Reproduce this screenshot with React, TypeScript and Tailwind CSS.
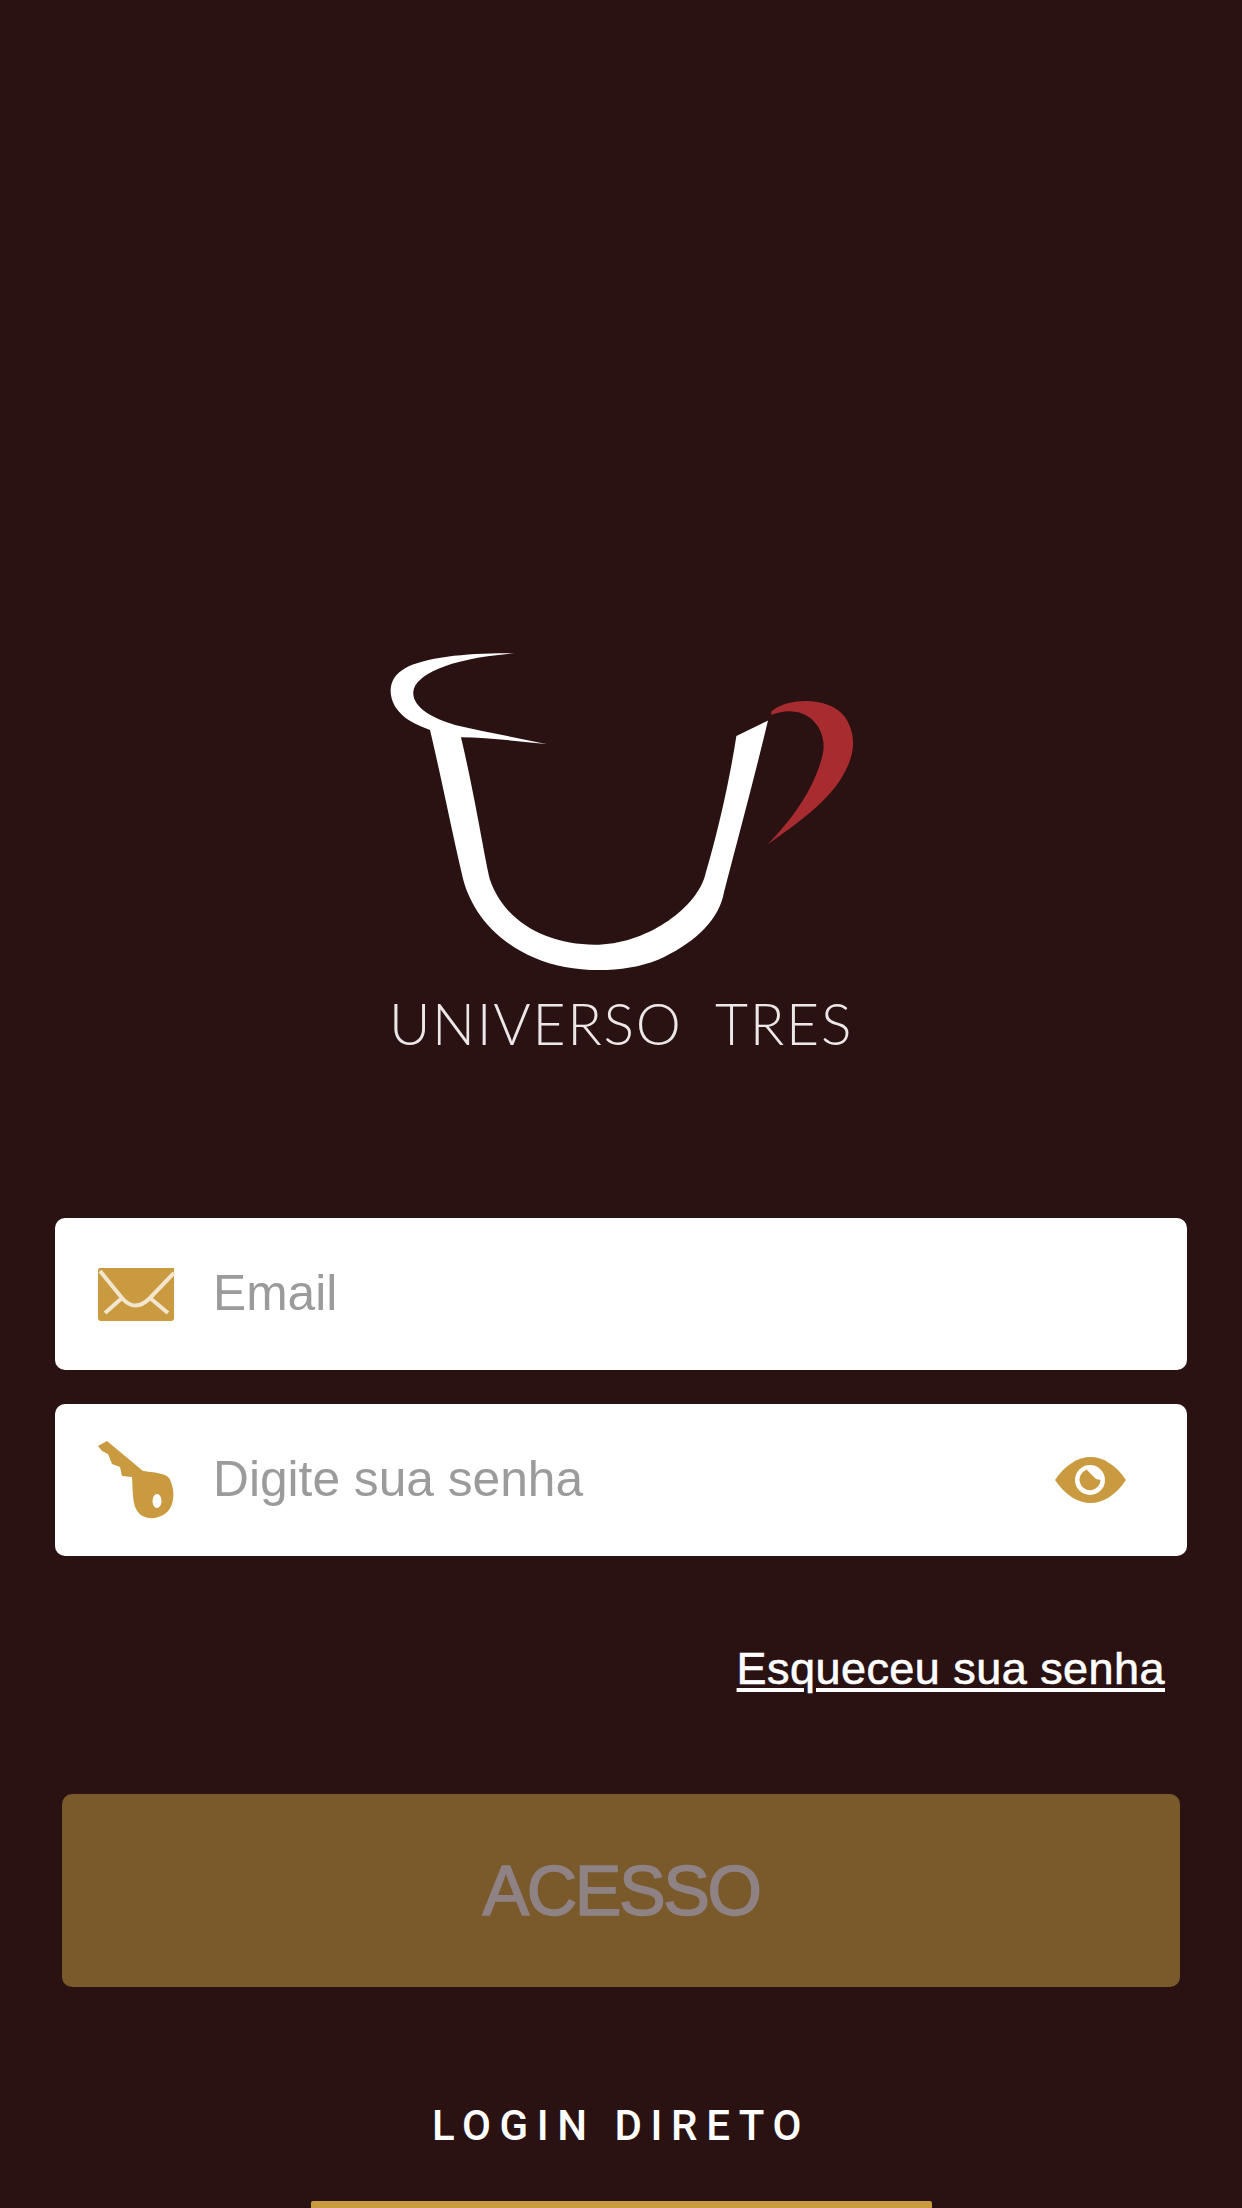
// App.tsx - login screen
import React from "react";

const GOLD = "#c99a40";

const CupLogo = () => (
  <svg viewBox="80 60 1400 970" className="block h-[323px] w-[467px]">
    <path
      fill="#ffffff"
      d="M460 70 C330 68 190 80 130 115 C85 140 75 185 100 230 C125 270 165 285 205 300 C240 450 270 600 300 730 C320 830 390 930 520 985 C620 1030 780 1035 890 990 C990 945 1065 880 1085 800 C1110 700 1170 480 1220 272 L1125 318 C1100 480 1060 640 1030 740 C1000 840 850 945 700 945 C560 945 430 880 385 750 C370 690 340 500 298 322 C380 322 470 335 555 342 C470 325 370 305 280 285 C210 265 150 230 155 185 C160 135 260 85 460 70 Z"
    />
    <path
      fill="#a82c2f"
      d="M1230 245 C1270 205 1400 195 1450 260 C1490 320 1480 380 1440 445 C1390 525 1300 585 1218 645 C1290 570 1360 480 1385 370 C1400 290 1330 215 1230 255 Z"
    />
  </svg>
);

const MailIcon = () => (
  <svg viewBox="0 0 78 54" className="block h-[54px] w-[78px]">
    <path fill={GOLD} d="M3 1 H77 V51 Q77 54 74 54 H4 Q1 54 1 51 V4 Q1 1 3 1 Z" />
    <path
      d="M3 4 L25 31 Q38 46 53 31 L77 6 M8 46 L25 31 M71 46 L53 31"
      fill="none"
      stroke="#f3e6cf"
      strokeWidth="4"
    />
  </svg>
);

const KeyIcon = () => (
  <svg viewBox="0 0 78 80" className="block h-[80px] w-[78px]">
    <path
      fill={GOLD}
      d="M1 6 L10 1 L46 31 C60 33 72 33 74 42 C79 55 76 70 66 75 C58 80 46 79 41 72 C35 65 36 50 35 37 L25 36 L23 27 L15 24 L11 14 L5 11 Z"
    />
    <ellipse cx="60" cy="61" rx="4.5" ry="7" fill="#ffffff" />
  </svg>
);

const EyeIcon = () => (
  <svg viewBox="0 0 71 46" className="block h-[46px] w-[71px]">
    <path fill={GOLD} d="M0 23 C10 8 23 0 35.5 0 C48 0 61 8 71 23 C61 38 48 46 35.5 46 C23 46 10 38 0 23 Z" />
    <circle cx="35" cy="23" r="15" fill="#ffffff" />
    <path fill={GOLD} d="M31 12 L41 22 L45.5 23 A10.5 10.5 0 1 1 31 13 Z" />
  </svg>
);

const Field = ({
  icon,
  label,
  trailing,
}: {
  icon: React.ReactNode;
  label: string;
  trailing?: React.ReactNode;
}) => (
  <div className="flex h-[152px] items-center rounded-[10px] bg-white pl-[42px] pr-[61px]">
    <div className="w-[78px] shrink-0">{icon}</div>
    <span className="ml-[38px] flex-1 text-[49.7px] leading-none text-[#9b9b9b]">{label}</span>
    {trailing}
  </div>
);

export default function App() {
  return (
    <div className="flex h-[2208px] w-full flex-col overflow-hidden bg-[#2a1213] font-['Liberation_Sans',Arial,sans-serif]">
      {/* Logo */}
      <div className="mt-[650px] flex flex-col items-center">
        <CupLogo />
        <div className="mt-[20px] whitespace-pre font-['Lato',sans-serif] text-[57px] font-light leading-[60px] tracking-[1.7px] text-[#ece8e8]">
          UNIVERSO  TRES
        </div>
      </div>

      {/* Form */}
      <div className="mx-[55px] mt-[165px] flex flex-col gap-[34px]">
        <Field icon={<MailIcon />} label="Email" />
        <Field icon={<KeyIcon />} label="Digite sua senha" trailing={<EyeIcon />} />
      </div>

      <div className="mt-[87px] flex justify-end pr-[77px]">
        <a className="text-[45px] leading-[52px] tracking-[0.45px] text-white underline decoration-[4px] underline-offset-[4px] [-webkit-text-stroke:0.6px_#ffffff]">
          Esqueceu sua senha
        </a>
      </div>

      <button className="mx-[62px] mt-[99px] flex h-[193px] shrink-0 items-center justify-center rounded-[10px] bg-[#7a5a2b] text-[70px] leading-none tracking-[-2.5px] text-[#8f8285] [-webkit-text-stroke:1.5px_#8f8285]">
        ACESSO
      </button>

      <div className="mt-[114px] text-center font-['Roboto',sans-serif] text-[42px] font-medium leading-[50px] tracking-[8.6px] text-white">
        LOGIN DIRETO
      </div>

      <div className="mx-auto mt-[50px] h-[40px] w-[621px] shrink-0 rounded-t-[2px] bg-[#c99a40]" />
    </div>
  );
}
